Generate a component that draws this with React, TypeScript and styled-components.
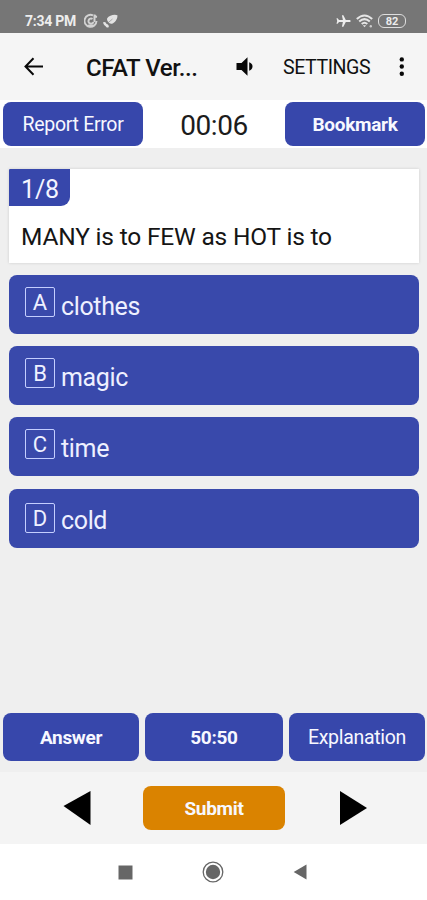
import React from 'react';
import styled, { createGlobalStyle } from 'styled-components';

const Global = createGlobalStyle`
  * { box-sizing: border-box; }
  body { margin: 0; background: #fff; font-family: Roboto, 'Liberation Sans', sans-serif; }
  button { font-family: inherit; border: 0; padding: 0; margin: 0; cursor: pointer; }
  svg { display: block; flex: none; }
`;

const Screen = styled.div`
  width: 427px;
  height: 900px;
  display: flex;
  flex-direction: column;
  background: #efefef;
  overflow: hidden;
`;

const StatusBar = styled.header`
  height: 33px;
  flex: none;
  display: flex;
  align-items: center;
  padding: 9px 21px 0 25px;
  background: #767676;
  color: #ededed;
`;

const Clock = styled.span`
  width: 59px;
  font-size: 14px;
  line-height: 16px;
  font-weight: 700;
  letter-spacing: -0.25px;
  white-space: nowrap;
`;

const StatusGroup = styled.div<{ $end?: boolean }>`
  display: flex;
  align-items: center;
  gap: 5px;
  margin-left: ${(p) => (p.$end ? 'auto' : '0')};
`;

const AppBar = styled.nav`
  height: 67px;
  flex: none;
  display: flex;
  align-items: center;
  padding: 0 22px 0 23px;
  background: #f5f5f5;
  color: #111;
`;

const IconButton = styled.button`
  display: flex;
  background: none;
  color: #080808;
`;

const Title = styled.h1`
  margin: 2px 0 0 41px;
  width: 150px;
  font-size: 24px;
  line-height: 30px;
  font-weight: 500;
  letter-spacing: -0.4px;
  white-space: nowrap;
`;

const SettingsLink = styled.button`
  background: none;
  color: #111;
  margin-left: 29px;
  margin-right: auto;
  padding-top: 2px;
  text-align: left;
  font-size: 19.6px;
  line-height: 24px;
  letter-spacing: -0.45px;
`;

const TimerBar = styled.section`
  height: 48px;
  flex: none;
  display: flex;
  justify-content: space-between;
  align-items: center;
  padding: 0 2px 0 3px;
  background: #fff;
`;

const Timer = styled.span`
  font-size: 28px;
  line-height: 34px;
  letter-spacing: -0.4px;
  color: #1c1c1c;
  padding-top: 3px;
`;

const Action = styled.button<{ $w: number; $h: number; $bold?: boolean; $accent?: boolean }>`
  width: ${(p) => p.$w}px;
  height: ${(p) => p.$h}px;
  flex: none;
  padding-top: 2px;
  border-radius: 8px;
  background: ${(p) => (p.$accent ? '#da8300' : '#3747ab')};
  color: #f7f8ff;
  font-size: ${(p) => (p.$bold ? 19 : 19.5)}px;
  line-height: 24px;
  font-weight: ${(p) => (p.$bold ? 700 : 400)};
  letter-spacing: -0.3px;
  white-space: nowrap;
`;

const Quiz = styled.main`
  flex: 1;
  display: flex;
  flex-direction: column;
  padding: 21px 8px 0 9px;
`;

const QuestionCard = styled.section`
  height: 94px;
  flex: none;
  background: #fff;
  box-shadow: 0 0 3px rgba(0, 0, 0, 0.14);
`;

const Counter = styled.div`
  width: 61px;
  height: 37px;
  padding: 3px 0 0 1px;
  border-radius: 1px 0 9px 0;
  background: #3747ab;
  color: #f4f5ff;
  font-size: 25px;
  line-height: 36px;
  letter-spacing: -0.2px;
  text-align: center;
`;

const Question = styled.p`
  margin: 16px 0 0 12px;
  font-size: 24.5px;
  line-height: 30px;
  letter-spacing: -0.19px;
  color: #151515;
  white-space: nowrap;
`;

const Options = styled.div`
  display: flex;
  flex-direction: column;
  gap: 12.2px;
  margin-top: 12px;
`;

const OptionRow = styled.button`
  height: 59px;
  display: flex;
  align-items: flex-start;
  padding: 12px 16px 0;
  gap: 6px;
  border-radius: 8px;
  background: #3949ab;
  color: #eef0ff;
  text-align: left;
`;

const Letter = styled.span<{ $drop: number }>`
  width: 30px;
  height: 30px;
  margin-top: ${(p) => p.$drop}px;
  flex: none;
  border: 1.5px solid #c4ceff;
  border-radius: 2px;
  font-size: 22px;
  line-height: 29px;
  text-align: center;
`;

const OptionText = styled.span`
  font-size: 25px;
  line-height: 30px;
  letter-spacing: -0.35px;
  padding-top: 5px;
`;

const Helpers = styled.section`
  height: 59px;
  flex: none;
  display: flex;
  justify-content: space-between;
  padding: 0 2px 0 3px;
`;

const SubmitBar = styled.section`
  height: 72px;
  flex: none;
  display: flex;
  align-items: center;
  justify-content: space-between;
  padding: 0 60px 0 63px;
  background: #f4f4f4;

  ${Action} {
    margin-right: 2px;
  }
`;

const SystemNav = styled.footer`
  height: 56px;
  flex: none;
  display: flex;
  align-items: center;
  justify-content: space-between;
  padding: 0 120px 0 118px;
  background: #fff;
`;

const options = [
  { letter: 'A', text: 'clothes', drop: 0 },
  { letter: 'B', text: 'magic', drop: 0 },
  { letter: 'C', text: 'time', drop: 0 },
  { letter: 'D', text: 'cold', drop: 2 },
];

const RecordIcon = () => (
  <svg width="14" height="16" viewBox="0 0 14 16" fill="none" stroke="#d2d2d2">
    <path d="M9 2.4A6 6 0 1 0 12.5 8" strokeWidth="1.9" />
    <path d="M9.5 9a2.6 2.6 0 1 1-1-3M10.5 9V1.5q.2 2 2.5 2.5" strokeWidth="2" />
    <path d="M4 12.3h6" strokeWidth="1.4" />
  </svg>
);

const DishIcon = () => (
  <svg width="15" height="15" viewBox="0 0 15 15" fill="#e3e3e3">
    <path d="M4.2 4.2C6 1.3 11.5-.2 14.4 1.2c.4 3.6-2.3 7.2-5.3 8.5-1.8.5-3-.4-3.6-1.6C4.4 7.2 3.7 5.8 4.2 4.2Z" />
    <path d="M.2 8.2c1.5-.8 3 .2 3.3 1.8 1.5.3 2.5 1.2 2.3 2.7-.3 1.4-2.6 1-3.1-.4C1.3 11.5.1 9.8.2 8.2Z" />
    <path d="m6 8 3.5-3" stroke="#999" strokeWidth=".8" />
  </svg>
);

const PlaneIcon = () => (
  <svg width="15" height="14" viewBox="0 0 15 14" fill="#ededed">
    <path d="M14.7 7c0-.7-.6-1.1-1.3-1.1H9.8L7.4 1.2H5.9l1 4.7H3L1.6 4.3H.5L1.2 7 .5 9.7h1.1L3 8.1h3.9l-1 4.7h1.5l2.4-4.7h3.6c.7 0 1.3-.4 1.3-1.1Z" />
  </svg>
);

const WifiIcon = () => (
  <svg width="17" height="14" viewBox="0 0 17 14" fill="none" stroke="#e6e6e6" strokeWidth="2">
    <path d="M.8 5Q8.5-2 16.2 5M3.2 7.5q5.3-4.8 10.6 0M5.7 10q2.8-2.5 5.6 0" />
    <path d="m6.8 11.2 1.7 2 1.7-2Z" fill="#e6e6e6" stroke="none" />
    <circle cx="14.8" cy="12.3" r="1.2" fill="#ccc" stroke="none" />
  </svg>
);

const Battery = styled.span`
  width: 28px;
  height: 14px;
  border: 1.5px solid #dedede;
  border-radius: 6px;
  font-size: 11px;
  line-height: 13px;
  font-weight: 700;
  text-align: center;
`;

const BackIcon = () => (
  <svg width="22" height="20" viewBox="0 0 22 20" fill="none" stroke="currentColor" strokeWidth="2">
    <path d="M20 9.5H3M10.5 1.3 2.5 9.5l8 8.2" />
  </svg>
);

const SpeakerIcon = () => (
  <svg width="18" height="20" viewBox="0 0 18 20" fill="currentColor">
    <path d="M.5 6h5L11.5.2v18.6l-6-5.8h-5Z" />
    <path d="M13.2 5.3c4.4 1.2 4.4 7.2 0 8.4Z" />
  </svg>
);

const MoreIcon = () => (
  <svg width="6" height="20" viewBox="0 0 6 20" fill="currentColor">
    <circle cx="2.8" cy="2.4" r="2.2" />
    <circle cx="2.8" cy="9.5" r="2.2" />
    <circle cx="2.8" cy="16.7" r="2.2" />
  </svg>
);

export default function App() {
  return (
    <>
      <Global />
      <Screen>
        <StatusBar>
          <Clock>7:34 PM</Clock>
          <StatusGroup>
            <RecordIcon />
            <DishIcon />
          </StatusGroup>
          <StatusGroup $end>
            <PlaneIcon />
            <WifiIcon />
            <Battery>82</Battery>
          </StatusGroup>
        </StatusBar>
        <AppBar>
          <IconButton aria-label="Back"><BackIcon /></IconButton>
          <Title>CFAT Ver...</Title>
          <IconButton aria-label="Sound"><SpeakerIcon /></IconButton>
          <SettingsLink>SETTINGS</SettingsLink>
          <IconButton aria-label="More"><MoreIcon /></IconButton>
        </AppBar>
        <TimerBar>
          <Action $w={140} $h={44}>Report Error</Action>
          <Timer>00:06</Timer>
          <Action $w={140} $h={44} $bold>Bookmark</Action>
        </TimerBar>
        <Quiz>
          <QuestionCard>
            <Counter>1/8</Counter>
            <Question>MANY is to FEW as HOT is to</Question>
          </QuestionCard>
          <Options>
            {options.map((o) => (
              <OptionRow key={o.letter}>
                <Letter $drop={o.drop}>{o.letter}</Letter>
                <OptionText>{o.text}</OptionText>
              </OptionRow>
            ))}
          </Options>
        </Quiz>
        <Helpers>
          <Action $w={136} $h={48} $bold>Answer</Action>
          <Action $w={138} $h={48} $bold>50:50</Action>
          <Action $w={136} $h={48}>Explanation</Action>
        </Helpers>
        <SubmitBar>
          <IconButton aria-label="Previous question">
            <svg width="28" height="36" viewBox="0 0 28 36"><path d="M27.5 1v34L.5 16Z" /></svg>
          </IconButton>
          <Action $w={142} $h={44} $bold $accent>Submit</Action>
          <IconButton aria-label="Next question">
            <svg width="28" height="36" viewBox="0 0 28 36"><path d="M1 1v34l27-17Z" /></svg>
          </IconButton>
        </SubmitBar>
        <SystemNav>
          <svg width="15" height="15" viewBox="0 0 15 15"><path d="M.5.5h14v14H.5Z" fill="#666" /></svg>
          <svg width="22" height="22" viewBox="0 0 22 22">
            <circle cx="11" cy="11" r="9.8" fill="#fff" stroke="#666" strokeWidth="1.3" />
            <circle cx="11" cy="11" r="7.2" fill="#666" />
          </svg>
          <svg width="14" height="16" viewBox="0 0 14 16"><path d="M13.5.5v15L.7 8Z" fill="#666" /></svg>
        </SystemNav>
      </Screen>
    </>
  );
}
